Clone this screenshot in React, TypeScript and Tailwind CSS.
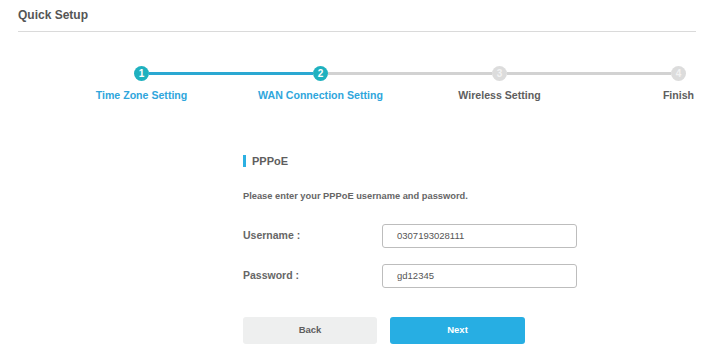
import React from "react";

/* ------------------------------------------------------------------ */
/*  Quick Setup – PPPoE step                                           */
/* ------------------------------------------------------------------ */

const steps = [
    { n: 1, label: "Time Zone Setting", done: true },
    { n: 2, label: "WAN Connection Setting", done: true },
    { n: 3, label: "Wireless Setting", done: false },
    { n: 4, label: "Finish", done: false },
];

function Circle({ n, done }: { n: number; done: boolean }) {
    return (
        <div
            className={
                done
                    ? "flex items-center justify-center w-[15px] h-[15px] shrink-0 rounded-full bg-[#1fb1bf] text-white text-[10px] font-bold leading-none"
                    : "flex items-center justify-center w-[15px] h-[15px] shrink-0 rounded-full bg-[#dcdcdc] text-[#f2f2f2] text-[10px] font-bold leading-none"
            }>
            {n}
        </div>
    );
}

function Line({ active }: { active: boolean }) {
    return (
        <div className={active ? "w-[164px] h-[3px] bg-[#2aa8d2]" : "w-[164px] h-[3px] bg-[#d2d2d2]"} />
    );
}

export default function App() {
    return (
        <div className="w-[727px] h-[364px] overflow-hidden bg-white"
            style={{ fontFamily: "'Liberation Sans', Arial, sans-serif" }}>

            {/* ========== HEADER ========== */}
            <div className="pl-[18px] pt-[7px]">
                <h1 className="text-[12px] leading-[16px] font-bold text-[#555555]">Quick Setup</h1>
                <div className="mt-[8px] w-[678px] h-px bg-[#dadada]" />
            </div>

            {/* ========== STEPPER ========== */}
            <div className="mt-[34px] ml-[134px] flex items-center">
                <Circle n={1} done />
                <Line active />
                <Circle n={2} done />
                <Line active={false} />
                <Circle n={3} done={false} />
                <Line active={false} />
                <Circle n={4} done={false} />
            </div>
            <div className="mt-[7px] ml-[52px] grid grid-cols-[repeat(4,179px)]">
                {steps.map((s) => (
                    <div key={s.n}
                        className={
                            s.done
                                ? "text-center whitespace-nowrap text-[10.6px] leading-[14px] font-bold text-[#2fa6dc]"
                                : "text-center whitespace-nowrap text-[10.6px] leading-[14px] font-bold text-[#5e5e5e]"
                        }>
                        {s.label}
                    </div>
                ))}
            </div>

            {/* ========== FORM ========== */}
            <div className="ml-[243px] mt-[53px]">
                <div className="flex items-center h-[12px]">
                    <div className="w-[3px] h-[12px] bg-[#2cb0e2]" />
                    <span className="ml-[6px] text-[11px] leading-[12px] font-bold text-[#5e5e5e]">PPPoE</span>
                </div>

                <p className="mt-[23px] text-[9.3px] leading-[12px] font-bold text-[#666666]">
                    Please enter your PPPoE username and password.
                </p>

                <div className="mt-[22px] flex items-center">
                    <label className="w-[139px] text-[10.5px] font-bold text-[#666666]">Username :</label>
                    <div className="flex items-center w-[195px] h-[24px] px-[14px] rounded-[3px] border border-[#bdbdbd] text-[9.5px] text-[#555555]">
                        0307193028111
                    </div>
                </div>

                <div className="mt-[16px] flex items-center">
                    <label className="w-[139px] text-[10.5px] font-bold text-[#666666]">Password :</label>
                    <div className="flex items-center w-[195px] h-[24px] px-[14px] rounded-[3px] border border-[#bdbdbd] text-[9.5px] text-[#555555]">
                        gd12345
                    </div>
                </div>

                <div className="mt-[29px] flex items-center gap-[13px]">
                    <button className="w-[134px] h-[27px] rounded-[3px] bg-[#eeefef] text-[9.5px] font-bold text-[#5e5e5e]">
                        Back
                    </button>
                    <button className="w-[135px] h-[27px] rounded-[3px] bg-[#27aee3] text-[9.5px] font-bold text-white">
                        Next
                    </button>
                </div>
            </div>
        </div>
    );
}
